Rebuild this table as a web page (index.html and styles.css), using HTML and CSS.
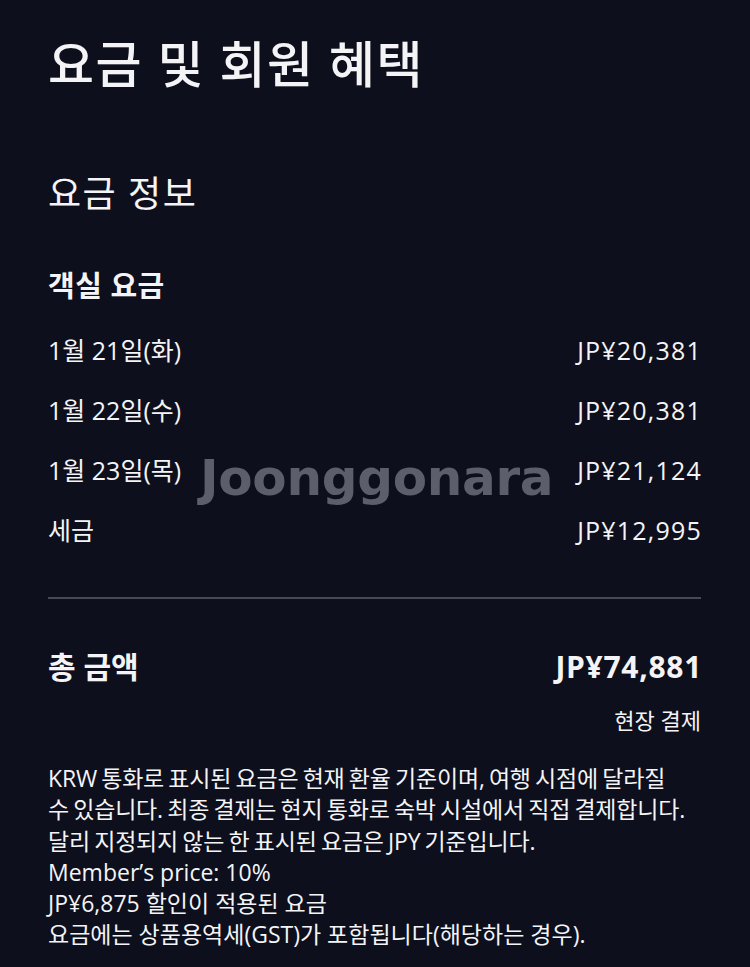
FILE: index.html
```html
<!DOCTYPE html>
<html lang="ko">
<head>
<meta charset="utf-8">
<link rel="stylesheet" href="styles.css">
</head>
<body>
<main class="page">
  <h1 class="title">요금 및 회원 혜택</h1>
  <h2 class="section">요금 정보</h2>
  <h3 class="sub">객실 요금</h3>
  <ul class="rows">
    <li class="row"><span>1월 21일(화)</span><span class="amount">JP¥20,381</span></li>
    <li class="row"><span>1월 22일(수)</span><span class="amount">JP¥20,381</span></li>
    <li class="row"><span>1월 23일(목)</span><span class="amount">JP¥21,124</span></li>
    <li class="row"><span>세금</span><span class="amount">JP¥12,995</span></li>
  </ul>
  <hr class="divider">
  <div class="total"><span>총 금액</span><span class="amount">JP¥74,881</span></div>
  <div class="pay">현장 결제</div>
  <div class="notes">
    <p class="lead">KRW 통화로 표시된 요금은 현재 환율 기준이며, 여행 시점에 달라질<br>수 있습니다. 최종 결제는 현지 통화로 숙박 시설에서 직접 결제합니다. 달리 지정되지 않는 한 표시된 요금은 JPY 기준입니다.</p>
    <p>Member’s price: 10%</p>
    <p>JP¥6,875 할인이 적용된 요금</p>
    <p>요금에는 상품용역세(GST)가 포함됩니다(해당하는 경우).</p>
  </div>
  <div class="watermark">Joonggonara</div>
</main>
</body>
</html>
```

FILE: styles.css
```css
* { box-sizing: border-box; margin: 0; padding: 0; }
html, body { background: #0d0f1d; }
body {
  color: #f4f4f6;
  font-family: "Open Sans", "Noto Sans CJK KR", sans-serif;
}
.page {
  position: relative;
  padding: 28px 49px 0 48px;
  height: 967px;
  overflow: hidden;
}
.title {
  font-size: 50px;
  font-weight: 500;
  line-height: 72px;
  letter-spacing: 1.5px;
}
.section {
  margin-top: 72px;
  font-size: 36px;
  font-weight: 400;
  line-height: 44px;
  letter-spacing: 1.5px;
}
.sub {
  margin-top: 52px;
  font-size: 29px;
  font-weight: 700;
  line-height: 36px;
  letter-spacing: 0.5px;
}
.rows { list-style: none; margin-top: 16px; }
.row {
  display: flex;
  justify-content: space-between;
  font-size: 25px;
  line-height: 60px;
}
.row .amount { letter-spacing: 1.2px; margin-right: -1px; }
.divider {
  border: 0;
  height: 2px;
  background: #474955;
  margin-top: 37px;
}
.total {
  display: flex;
  justify-content: space-between;
  margin-top: 48px;
  font-size: 30px;
  font-weight: 700;
  line-height: 40px;
}
.total .amount { letter-spacing: 0.7px; margin-right: -1px; }
.pay {
  text-align: right;
  font-size: 22px;
  line-height: 30px;
  margin-top: 18px;
}
.notes {
  margin-top: 28px;
  margin-right: -4px;
  font-size: 23px;
  line-height: 31.3px;
}
.notes .lead {
  letter-spacing: -0.2px;
  word-spacing: -1.5px;
}
.watermark {
  position: absolute;
  left: 200px;
  top: 449px;
  font-family: "DejaVu Sans", sans-serif;
  font-weight: 700;
  font-size: 50px;
  color: #5c5e6b;
  letter-spacing: -0.3px;
}
```
